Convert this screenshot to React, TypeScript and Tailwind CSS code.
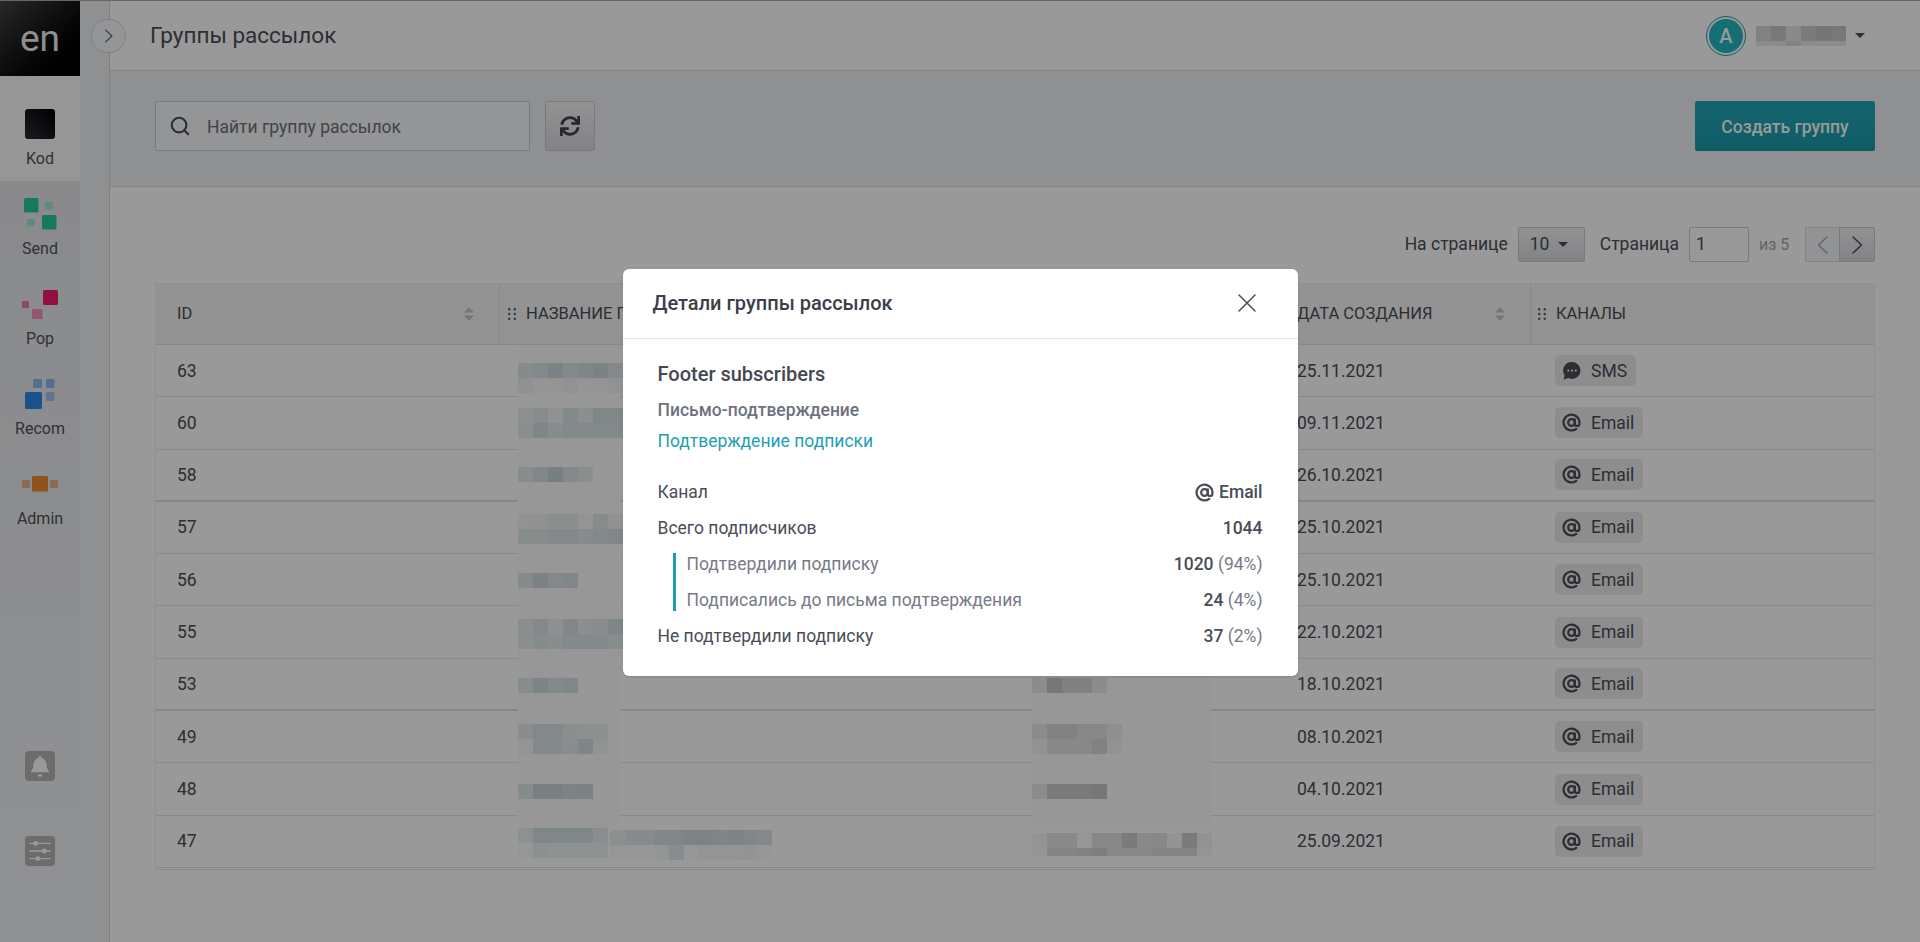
import { Search } from "lucide-react"
import { FaSync } from "react-icons/fa"

type Row = {
  id: number
  date: string
  channel: "SMS" | "Email"
  heavy?: boolean
  nudge: string
  name: number[][]
  sender?: number[][]
}

const rows: Row[] = [
  { id: 63, date: "25.11.2021", channel: "SMS", nudge: "mt-[14px]", name: [[.14, .17, .25, .15, .2, .24, .15], [.06, .02, .02, .05, .02, .02, .05]] },
  { id: 60, date: "09.11.2021", channel: "Email", nudge: "mt-0", name: [[.08, .12, .07, .17, .09, .18, .18], [.1, .2, .13, .16, .16, .17, .17]] },
  { id: 58, date: "26.10.2021", channel: "Email", nudge: "mt-0", heavy: true, name: [[.13, .18, .28, .16, .1]] },
  { id: 57, date: "25.10.2021", channel: "Email", nudge: "mt-[2px]", name: [[.05, .06, .1, .1, .03, .13, .06], [.13, .13, .16, .16, .14, .17, .18]] },
  { id: 56, date: "25.10.2021", channel: "Email", nudge: "mt-[2px]", name: [[.14, .24, .16, .19]] },
  { id: 55, date: "22.10.2021", channel: "Email", nudge: "mt-[4px]", name: [[.1, .16, .08, .18, .09, .12, .2], [.09, .14, .11, .15, .15, .15, .13]] },
  { id: 53, date: "18.10.2021", channel: "Email", nudge: "mt-[4px]", heavy: true, name: [[.13, .22, .15, .19]], sender: [[.08, .22, .16, .16, .08]] },
  { id: 49, date: "08.10.2021", channel: "Email", nudge: "mt-[4px]", name: [[.11, .16, .16, .1, .08, .08], [.03, .15, .15, .11, .2, .05]], sender: [[.08, .14, .14, .1, .1, .06], [.03, .1, .1, .1, .14, .03]] },
  { id: 48, date: "04.10.2021", channel: "Email", nudge: "mt-[4px]", name: [[.14, .27, .27, .22, .24]], sender: [[.08, .2, .2, .2, .22]] },
  { id: 47, date: "25.09.2021", channel: "Email", nudge: "mt-[6px]", name: [[.09, .2, .2, .2, .2, .12], [.03, .1, .08, .08, .08, .08]], sender: [[.03, .1, .1, .02, .12, .12, .2, .1, .12, .04, .2, .05], [.03, .14, .14, .16, .18, .12, .12, .12, .14, .14, .14, .03]] },
]

const nameTail = [
  [.1, .15, .15, .2, .2, .25, .25, .22, .24, .2, .18],
  [.03, .02, .02, .04, .14, .02, .05, .05, .05, .06, .03],
]

function Mosaic({ cells, tone }: { cells: number[][]; tone: "teal" | "gray" }) {
  const base = tone === "teal" ? "50,110,125" : "10,10,25"
  return (
    <div className="relative z-[2] flex shrink-0 flex-col">
      {cells.map((line, i) => (
        <div key={i} className="flex">
          {line.map((a, j) => (
            <div key={j} className="h-[15px] w-[15px]" style={{ backgroundColor: `rgba(${base},${a})` }} />
          ))}
        </div>
      ))}
    </div>
  )
}

function Grip() {
  return (
    <svg viewBox="0 0 8 12" className="h-[12px] w-[8px]" fill="#5b5e66">
      <circle cx="1.2" cy="1.2" r="1.2" />
      <circle cx="6.8" cy="1.2" r="1.2" />
      <circle cx="1.2" cy="6" r="1.2" />
      <circle cx="6.8" cy="6" r="1.2" />
      <circle cx="1.2" cy="10.8" r="1.2" />
      <circle cx="6.8" cy="10.8" r="1.2" />
    </svg>
  )
}

function SortArrows() {
  return (
    <svg viewBox="0 0 10 14" className="h-[14px] w-[10px]" fill="#c2c5cc">
      <path d="M5 0l5 5.500H0z" />
      <path d="M5 14l5-5.500H0z" />
    </svg>
  )
}

function Chevron({ dir, className }: { dir: "left" | "right"; className: string }) {
  return (
    <svg viewBox="0 0 11 18" className={className} fill="none" stroke="currentColor" strokeWidth="1.500" strokeLinecap="round" strokeLinejoin="round">
      <path d={dir === "left" ? "M10 1L1.500 9 10 17" : "M1 1l8.500 8L1 17"} />
    </svg>
  )
}

function AtIcon({ className }: { className: string }) {
  return (
    <svg viewBox="0 0 24 24" className={className} fill="none" stroke="currentColor" strokeWidth="2.800" strokeLinecap="round">
      <circle cx="12" cy="12" r="4.200" />
      <path d="M16.200 8v5.500a2.900 2.900 0 0 0 5.800 0V12a10 10 0 1 0-4 8" />
    </svg>
  )
}

function SmsIcon() {
  return (
    <svg viewBox="0 0 18 18" className="h-[19px] w-[19px]">
      <path fill="#4a4d57" d="M9.500 1a8 8 0 0 1 0 16c-1.300 0-2.500-.3-3.500-.8L1.500 17.500l1-4A8 8 0 0 1 9.500 1z" />
      <circle cx="6" cy="9" r="1" fill="#fff" />
      <circle cx="9.500" cy="9" r="1" fill="#fff" />
      <circle cx="13" cy="9" r="1" fill="#fff" />
    </svg>
  )
}

function Chip({ channel }: { channel: "SMS" | "Email" }) {
  return (
    <div className="flex h-[31px] items-center gap-[10px] rounded-[5px] bg-[#ebebed] pl-[7px] pr-[9px] text-[#4a4d57]">
      {channel === "SMS" ? <SmsIcon /> : <AtIcon className="h-[19px] w-[19px]" />}
      <span>{channel}</span>
    </div>
  )
}

function NavItem({ label, active, children }: { label: string; active?: boolean; children: React.ReactNode }) {
  return (
    <div className={`flex h-[90px] flex-col items-center pt-[15px] ${active ? "bg-[#fbfbfc]" : ""}`}>
      <svg viewBox="0 0 40 36" className="h-[36px] w-[40px]">
        {children}
      </svg>
      <span className="mt-[7px] text-[16px] leading-[20px] text-[#4e515a]">{label}</span>
    </div>
  )
}

function Modal() {
  const stat = "flex h-[36px] items-center justify-between"
  const sub = "flex h-[22px] items-center justify-between"
  const strong = "font-medium text-[#4a4d57]"
  return (
    <div className="absolute inset-0 z-20 flex items-center justify-center bg-black/40 pt-[2px]">
      <div className="h-[407px] w-[675px] rounded-[6px] bg-white text-[17.5px] text-[#4a4d57] shadow-sm">
        <div className="flex h-[70px] items-center justify-between border-b border-[#e4e6ea] pb-[2px] pl-[30px] pr-[42px]">
          <span className="text-[20px] font-medium text-[#3c3f48]">Детали группы рассылок</span>
          <svg viewBox="0 0 18 18" className="h-[18px] w-[18px]" fill="none" stroke="#4a4d57" strokeWidth="1.500" strokeLinecap="round">
            <path d="M1 1l16 16M17 1L1 17" />
          </svg>
        </div>
        <div className="px-[35px] pt-[22px]">
          <div className="text-[20px] font-medium leading-[26px] text-[#454852]">Footer subscribers</div>
          <div className="mt-[11px] font-medium leading-[24px] text-[#6e7280]">Письмо-подтверждение</div>
          <div className="mt-[7px] leading-[24px] text-[#1d9fb2]">Подтверждение подписки</div>
          <div className="mt-[21px]">
            <div className={stat}>
              <span>Канал</span>
              <span className="flex items-center gap-[5px] font-medium">
                <AtIcon className="h-[19px] w-[19px]" />
                Email
              </span>
            </div>
            <div className={stat}>
              <span>Всего подписчиков</span>
              <span className="font-medium">1044</span>
            </div>
            <div className="my-[7px] ml-[15px] flex h-[58px] flex-col justify-between border-l-[3px] border-[#1d9fb2] pl-[11px] text-[#777a87]">
              <div className={sub}>
                <span>Подтвердили подписку</span>
                <span><b className={strong}>1020</b> (94%)</span>
              </div>
              <div className={sub}>
                <span>Подписались до письма подтверждения</span>
                <span><b className={strong}>24</b> (4%)</span>
              </div>
            </div>
            <div className={stat}>
              <span>Не подтвердили подписку</span>
              <span className="text-[#777a87]"><b className={strong}>37</b> (2%)</span>
            </div>
          </div>
        </div>
      </div>
    </div>
  )
}

export default function App() {
  return (
    <div className="relative flex h-[942px] w-[1920px] overflow-hidden border-t border-[#666] bg-white font-['Roboto',sans-serif] text-[17.5px] text-[#4a4d57]">
      {/* Sidebar */}
      <aside className="flex w-[80px] shrink-0 flex-col bg-gradient-to-b from-[#e3e4e7] to-[#f0f2f6]">
        <div className="flex h-[75px] items-center justify-center bg-gradient-to-br from-[#444] to-black text-[37px] text-[#eee]">en</div>
        <div className="h-[15px] bg-[#fbfbfc]" />
        <NavItem label="Kod" active>
          <defs>
            <linearGradient id="kod" x1="0" y1="1" x2="1" y2="0">
              <stop offset="0" stopColor="#2b2d36" />
              <stop offset="1" stopColor="#000" />
            </linearGradient>
          </defs>
          <rect x="5" y="3" width="30" height="30" rx="3" fill="url(#kod)" />
        </NavItem>
        <NavItem label="Send">
          <rect x="4" y="2" width="14.500" height="14.500" rx="1.500" fill="#26c99b" />
          <rect x="25" y="6" width="8" height="7.500" rx="1" fill="#9ee8cf" />
          <rect x="7" y="23" width="8" height="7.500" rx="1" fill="#9ee8cf" />
          <rect x="22" y="19" width="14.500" height="14.500" rx="1.500" fill="#26c99b" />
        </NavItem>
        <NavItem label="Pop">
          <rect x="23" y="4" width="15" height="15" rx="1.500" fill="#f01c70" />
          <rect x="2" y="15" width="7" height="7" rx="1" fill="#f07aa5" />
          <rect x="12" y="23" width="10.500" height="10" rx="1" fill="#f590b5" />
        </NavItem>
        <NavItem label="Recom">
          <rect x="13" y="3" width="9" height="9" rx="1.500" fill="#8ab8ee" />
          <rect x="26" y="3" width="8.500" height="9" rx="1.500" fill="#8ab8ee" />
          <rect x="5" y="16" width="17" height="17" rx="1.500" fill="#2b88ea" />
          <rect x="26" y="16" width="8.500" height="9" rx="1.500" fill="#9cc3f0" />
        </NavItem>
        <NavItem label="Admin">
          <rect x="2" y="14" width="8" height="8" rx="1" fill="#f0b088" />
          <rect x="12" y="10" width="16" height="15.500" rx="1.500" fill="#f08a30" />
          <rect x="30" y="14" width="8" height="8" rx="1" fill="#f0b088" />
        </NavItem>
        <div className="mt-auto flex flex-col items-center gap-[55px] pb-[76px]">
          <div className="flex h-[30px] w-[30px] items-center justify-center rounded-[4px] bg-[#b4b4b4]">
            <svg viewBox="0 0 20 20" className="h-[24px] w-[24px]" fill="#fff">
              <path d="M10 1.500a1.300 1.300 0 0 1 1.300 1.300v.5c2.700.6 4.200 2.800 4.200 5.500 0 3 .9 4.300 2 5.500v1H2.500v-1c1.100-1.200 2-2.500 2-5.500 0-2.700 1.500-4.900 4.200-5.500v-.5A1.300 1.300 0 0 1 10 1.500z" />
              <path d="M8 17h4a2 2 0 0 1-4 0z" />
            </svg>
          </div>
          <div className="flex h-[30px] w-[30px] items-center justify-center rounded-[4px] bg-[#b4b4b4]">
            <svg viewBox="0 0 24 24" className="h-[26px] w-[26px]" fill="#fff" stroke="#fff" strokeWidth="1.300">
              <path d="M2 5h20M2 12h20M2 19h20" />
              <circle cx="8" cy="5" r="1.600" />
              <circle cx="16" cy="12" r="1.600" />
              <circle cx="10" cy="19" r="1.600" />
            </svg>
          </div>
        </div>
      </aside>

      {/* Collapsed side rail */}
      <div className="w-[30px] shrink-0 border-r border-[#d4d6da] bg-[#eef0f4]" />
      <button className="absolute left-[91px] top-[18px] z-10 flex h-[34px] w-[35px] items-center justify-center rounded-full border border-[#d6d8dc] bg-[#f7f8fa]">
        <Chevron dir="right" className="h-[14px] w-[8px] text-[#54575f]" />
      </button>

      <main className="min-w-0 flex-1">
        <header className="flex h-[70px] items-center justify-between border-b border-[#dcdee2] pl-[40px] pr-[55px]">
          <h1 className="text-[22.500px] leading-none text-[#4a4d57]">Группы рассылок</h1>
          <div className="flex items-center">
            <div className="flex h-[40px] w-[40px] items-center justify-center rounded-full border border-[#1d9fb2] p-[2px]">
              <div className="flex h-full w-full items-center justify-center rounded-full bg-[#22b8c2] text-[20px] font-medium text-white">A</div>
            </div>
            <div className="ml-[10px]">
              <Mosaic tone="gray" cells={[[.16, .22, .1, .2, .24, .22]]} />
              <div className="flex">
                <div className="h-[5px] w-[30px] bg-[#e8e8ea]" />
                <div className="h-[5px] w-[15px] bg-[#dadadd]" />
                <div className="h-[5px] w-[45px] bg-[#eaeaec]" />
              </div>
            </div>
            <div className="ml-[9px] h-0 w-0 border-x-[5px] border-t-[5px] border-x-transparent border-t-[#4a4d57]" />
          </div>
        </header>

        <section className="flex h-[116px] items-start justify-between border-b border-[#dcdee2] bg-[#eff1f4] px-[45px] pt-[30px]">
          <div className="flex items-center gap-[15px]">
            <div className="flex h-[50px] w-[375px] items-center rounded-[2px] border border-[#ccced3] bg-[#f7f8fa] pl-[13px]">
              <Search className="h-[22px] w-[22px] text-[#4a4d57]" strokeWidth={2.3} />
              <span className="ml-[16px] pt-[2px] text-[#6e7078]">Найти группу рассылок</span>
            </div>
            <button className="flex h-[50px] w-[50px] items-center justify-center rounded-[2px] border border-[#c9cbd0] bg-gradient-to-b from-[#f4f5f7] to-[#d9dade]">
              <FaSync className="h-[20px] w-[20px] text-[#3f424b]" />
            </button>
          </div>
          <button className="h-[50px] w-[180px] rounded-[2px] bg-gradient-to-b from-[#20a8b9] to-[#1b9aaa] pt-[2px] font-medium text-white">Создать группу</button>
        </section>

        <div className="px-[45px] pt-[40px]">
          <div className="flex h-[35px] items-center justify-end">
            <span>На странице</span>
            <div className="ml-[10px] flex h-[35px] w-[67px] items-center rounded-[2px] border border-[#c9cbd0] bg-gradient-to-b from-[#f4f5f7] to-[#d9dade] pl-[11px]">
              10
              <span className="ml-[9px] h-0 w-0 border-x-[5px] border-t-[5px] border-x-transparent border-t-[#4a4d57]" />
            </div>
            <span className="ml-[15px]">Страница</span>
            <div className="ml-[10px] flex h-[35px] w-[60px] items-center rounded-[2px] border border-[#c9cbd0] pl-[6px]">1</div>
            <span className="ml-[10px] w-[46px] text-[16px] text-[#a5a7ae]">из 5</span>
            <div className="flex h-[35px] w-[35px] items-center justify-center rounded-l-[2px] border border-[#d8dade] bg-[#f4f5f7]">
              <Chevron dir="left" className="h-[18px] w-[11px] text-[#a5a7ae]" />
            </div>
            <div className="-ml-px flex h-[35px] w-[36px] items-center justify-center rounded-r-[2px] border border-[#c9cbd0] bg-gradient-to-b from-[#f4f5f7] to-[#d9dade]">
              <Chevron dir="right" className="h-[18px] w-[11px] text-[#4a4d57]" />
            </div>
          </div>

          {/* Table */}
          <div className="relative mt-[21px] border-x border-t border-[#eceef0]">
            <div className="flex h-[61px] items-center border-b border-[#e2e3e6] bg-[#f5f5f6] text-[16.500px] text-[#4a4d57]">
              <div className="flex h-full w-[344px] items-center justify-between border-r border-[#e2e3e6] pl-[21px] pr-[25px]">
                <span>ID</span>
                <SortArrows />
              </div>
              <div className="flex h-full w-[511px] items-center gap-[10px] pl-[8px]">
                <Grip />
                <span>НАЗВАНИЕ Г</span>
              </div>
              <div className="w-[265px]" />
              <div className="flex h-full w-[255px] items-center justify-between border-r border-[#e2e3e6] pl-[21px] pr-[25px]">
                <span>ДАТА СОЗДАНИЯ</span>
                <SortArrows />
              </div>
              <div className="flex items-center gap-[10px] pl-[7px]">
                <Grip />
                <span>КАНАЛЫ</span>
              </div>
            </div>

            {rows.map((row) => (
              <div key={row.id} className={`flex h-[52.300px] items-center ${row.heavy ? "border-b-2 border-[#dfe0e3]" : "border-b border-[#e4e5e8]"}`}>
                <div className="w-[344px] pl-[21px]">{row.id}</div>
                <div className={`flex w-[511px] items-start pl-[18px] ${row.nudge}`}>
                  <Mosaic tone="teal" cells={row.name} />
                  {row.id === 47 && (
                    <div className="relative z-[2] ml-[2px] mt-[2px] w-[162px] overflow-hidden">
                      <Mosaic tone="teal" cells={nameTail} />
                    </div>
                  )}
                </div>
                <div className={`w-[265px] pl-[21px] ${row.nudge}`}>
                  {row.sender && (
                    <div className={row.id === 47 ? "h-[23px] overflow-hidden" : ""}>
                      <Mosaic tone="gray" cells={row.sender} />
                    </div>
                  )}
                </div>
                <div className="w-[254px] pl-[21px]">{row.date}</div>
                <div className="pl-[25px]">
                  <div className="w-fit"><Chip channel={row.channel} /></div>
                </div>
              </div>
            ))}

            <div className="absolute bottom-[-2px] left-0 right-0 h-px bg-[#e4e5e8]" />
            {/* Masks left by the blurred columns */}
            <div className="absolute left-[362px] top-[61px] z-[1] h-[485px] w-[103px] bg-[#fcfcfc]" />
            <div className="absolute left-[876px] top-[61px] z-[1] h-[485px] w-[179px] bg-[#fcfcfc]" />
          </div>
        </div>
      </main>

      <Modal />
    </div>
  )
}
